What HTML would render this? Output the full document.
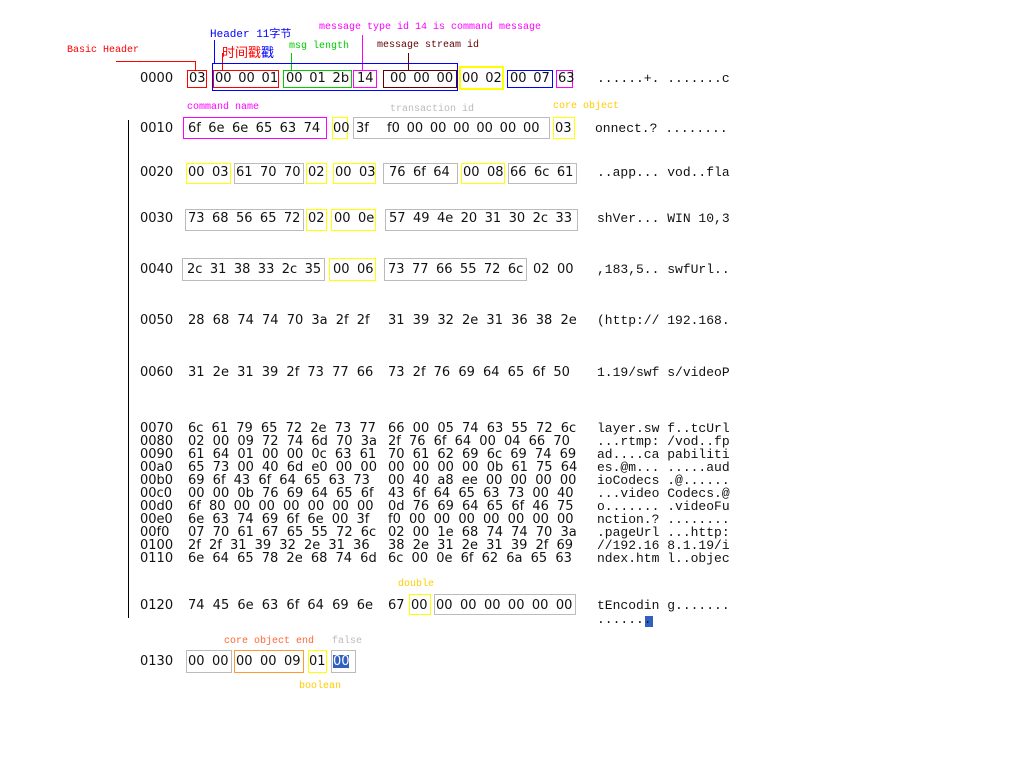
<!DOCTYPE html>
<html><head><meta charset="utf-8"><style>
body{margin:0;background:#fff;width:1024px;height:768px;position:relative;overflow:hidden;color:#111}
.t{position:absolute;font:13px "DejaVu Sans",sans-serif;white-space:pre;word-spacing:4px;line-height:16px}
.a{position:absolute;font:13px "Liberation Mono",monospace;white-space:pre;line-height:16px}
.m{position:absolute;font:13px "Liberation Mono",monospace;white-space:pre;line-height:13px}
.h{position:absolute;font:13px "DejaVu Sans",sans-serif;white-space:pre;word-spacing:4px;line-height:13px}
.l{position:absolute;font:10px "Liberation Mono",monospace;white-space:pre;line-height:12px}
.b{position:absolute;box-sizing:border-box;border:1px solid #bbb}
.v{position:absolute;width:1px}
.hz{position:absolute;height:1px}
.w{word-spacing:3.3px}
.w3{word-spacing:2.6px}
</style></head><body>

<div class="l" style="left:67px;top:45px;color:#f00">Basic Header</div>
<div class="hz" style="left:116px;top:61px;width:80px;background:#f00"></div>
<div class="v" style="left:195px;top:61px;height:9px;background:#f00"></div>
<div class="l" style="left:210px;top:27px;color:#00f;font-size:11px">Header 11<span style="font-family:'Noto Sans CJK SC',sans-serif">字节</span></div>
<div class="v" style="left:214px;top:40px;height:23px;background:#00f"></div>
<div class="l" style="left:222px;top:44px;color:#f00;font:13px 'Noto Sans CJK SC',sans-serif;line-height:16px">时间戳<span style="color:#00f">戳</span></div>
<div class="v" style="left:222px;top:53px;height:17px;background:#f00"></div>
<div class="l" style="left:289px;top:41px;color:#0c0">msg length</div>
<div class="v" style="left:291px;top:53px;height:17px;background:#0c0"></div>
<div class="l" style="left:319px;top:22px;color:#f0f">message type id 14 is command message</div>
<div class="v" style="left:362px;top:35px;height:35px;background:#f0f"></div>
<div class="l" style="left:377px;top:40px;color:#600">message stream id</div>
<div class="v" style="left:408px;top:53px;height:17px;background:#600"></div>

<div class="b" style="left:212px;top:63px;width:246px;height:28px;border-color:#00f"></div>
<div class="b" style="left:187px;top:70px;width:20px;height:18px;border-color:#f00"></div>
<div class="b" style="left:213px;top:70px;width:66px;height:18px;border-color:#f00"></div>
<div class="b" style="left:283px;top:70px;width:69px;height:18px;border-color:#0c0"></div>
<div class="b" style="left:353px;top:70px;width:24px;height:18px;border-color:#f0f"></div>
<div class="b" style="left:383px;top:70px;width:74px;height:18px;border-color:#600"></div>
<div class="b" style="left:459px;top:66px;width:45px;height:24px;border:2px solid #ff0"></div>
<div class="b" style="left:507px;top:70px;width:46px;height:18px;border-color:#00f"></div>
<div class="b" style="left:556px;top:70px;width:17px;height:18px;border-color:#f0f"></div>
<div class="t" style="left:140px;top:71px">0000</div>
<div class="t" style="left:189px;top:71px">03</div>
<div class="t w3" style="left:215px;top:71px">00 00 01</div>
<div class="t w3" style="left:286px;top:71px">00 01 2b</div>
<div class="t" style="left:357px;top:71px">14</div>
<div class="t w3" style="left:390px;top:71px">00 00 00</div>
<div class="t w3" style="left:462px;top:71px">00 02</div>
<div class="t w3" style="left:510px;top:71px">00 07</div>
<div class="t" style="left:558px;top:71px">63</div>
<div class="a" style="left:597px;top:71px">......+. .......c</div>

<div class="l" style="left:187px;top:102px;color:#f0f">command name</div>
<div class="l" style="left:390px;top:104px;color:#bbb">transaction id</div>
<div class="l" style="left:553px;top:101px;color:#fc0">core object</div>
<div class="v" style="left:128px;top:120px;height:498px;background:#000"></div>
<div class="b" style="left:183px;top:117px;width:144px;height:22px;border-color:#f0f"></div>
<div class="b" style="left:332px;top:117px;width:16px;height:22px;border-color:#ff0"></div>
<div class="b" style="left:353px;top:117px;width:197px;height:22px"></div>
<div class="b" style="left:553px;top:117px;width:22px;height:22px;border-color:#ff0"></div>
<div class="t" style="left:140px;top:121px">0010</div>
<div class="t w" style="left:188px;top:121px">6f 6e 6e 65 63 74</div>
<div class="t" style="left:333px;top:121px">00</div>
<div class="t" style="left:356px;top:121px">3f</div>
<div class="t w3" style="left:387px;top:121px">f0 00 00 00 00 00 00</div>
<div class="t" style="left:555px;top:121px">03</div>
<div class="a" style="left:595px;top:121px">onnect.? ........</div>

<div class="b" style="left:186px;top:163px;width:45px;height:21px;border-color:#ff0"></div>
<div class="b" style="left:234px;top:163px;width:70px;height:21px"></div>
<div class="b" style="left:306px;top:163px;width:21px;height:21px;border-color:#ff0"></div>
<div class="b" style="left:333px;top:163px;width:43px;height:21px;border-color:#ff0"></div>
<div class="b" style="left:383px;top:163px;width:75px;height:21px"></div>
<div class="b" style="left:461px;top:163px;width:44px;height:21px;border-color:#ff0"></div>
<div class="b" style="left:508px;top:163px;width:69px;height:21px"></div>
<div class="t" style="left:140px;top:165px">0020</div>
<div class="t w" style="left:188px;top:165px">00 03</div>
<div class="t w" style="left:236px;top:165px">61 70 70</div>
<div class="t" style="left:308px;top:165px">02</div>
<div class="t w" style="left:335px;top:165px">00 03</div>
<div class="t w" style="left:389px;top:165px">76 6f 64</div>
<div class="t w" style="left:463px;top:165px">00 08</div>
<div class="t w" style="left:510px;top:165px">66 6c 61</div>
<div class="a" style="left:597px;top:165px">..app... vod..fla</div>

<div class="b" style="left:185px;top:209px;width:119px;height:22px"></div>
<div class="b" style="left:306px;top:209px;width:21px;height:22px;border-color:#ff0"></div>
<div class="b" style="left:331px;top:209px;width:45px;height:22px;border-color:#ff0"></div>
<div class="b" style="left:385px;top:209px;width:193px;height:22px"></div>
<div class="t" style="left:140px;top:211px">0030</div>
<div class="t w" style="left:188px;top:211px">73 68 56 65 72</div>
<div class="t" style="left:308px;top:211px">02</div>
<div class="t w" style="left:334px;top:211px">00 0e</div>
<div class="t w" style="left:389px;top:211px">57 49 4e 20 31 30 2c 33</div>
<div class="a" style="left:597px;top:211px">shVer... WIN 10,3</div>

<div class="b" style="left:182px;top:258px;width:143px;height:23px"></div>
<div class="b" style="left:329px;top:258px;width:47px;height:23px;border-color:#ff0"></div>
<div class="b" style="left:384px;top:258px;width:143px;height:23px"></div>
<div class="t" style="left:140px;top:262px">0040</div>
<div class="t w" style="left:187px;top:262px">2c 31 38 33 2c 35</div>
<div class="t w" style="left:333px;top:262px">00 06</div>
<div class="t w" style="left:388px;top:262px">73 77 66 55 72 6c</div>
<div class="t w" style="left:533px;top:262px">02 00</div>
<div class="a" style="left:597px;top:262px">,183,5.. swfUrl..</div>

<div class="t" style="left:140px;top:313px">0050</div>
<div class="t" style="left:188px;top:313px">28 68 74 74 70 3a 2f 2f</div>
<div class="t" style="left:388px;top:313px">31 39 32 2e 31 36 38 2e</div>
<div class="a" style="left:597px;top:313px">(http:// 192.168.</div>
<div class="t" style="left:140px;top:365px">0060</div>
<div class="t" style="left:188px;top:365px">31 2e 31 39 2f 73 77 66</div>
<div class="t" style="left:388px;top:365px">73 2f 76 69 64 65 6f 50</div>
<div class="a" style="left:597px;top:365px">1.19/swf s/videoP</div>

<div class="h" style="left:140px;top:422px">0070
0080
0090
00a0
00b0
00c0
00d0
00e0
00f0
0100
0110</div>
<div class="h" style="left:188px;top:422px">6c 61 79 65 72 2e 73 77
02 00 09 72 74 6d 70 3a
61 64 01 00 00 0c 63 61
65 73 00 40 6d e0 00 00
69 6f 43 6f 64 65 63 73
00 00 0b 76 69 64 65 6f
6f 80 00 00 00 00 00 00
6e 63 74 69 6f 6e 00 3f
07 70 61 67 65 55 72 6c
2f 2f 31 39 32 2e 31 36
6e 64 65 78 2e 68 74 6d</div>
<div class="h" style="left:388px;top:422px">66 00 05 74 63 55 72 6c
2f 76 6f 64 00 04 66 70
70 61 62 69 6c 69 74 69
00 00 00 00 0b 61 75 64
00 40 a8 ee 00 00 00 00
43 6f 64 65 63 73 00 40
0d 76 69 64 65 6f 46 75
f0 00 00 00 00 00 00 00
02 00 1e 68 74 74 70 3a
38 2e 31 2e 31 39 2f 69
6c 00 0e 6f 62 6a 65 63</div>
<div class="m" style="left:597px;top:422px">layer.sw f..tcUrl
...rtmp: /vod..fp
ad....ca pabiliti
es.@m... .....aud
ioCodecs .@......
...video Codecs.@
o....... .videoFu
nction.? ........
.pageUrl ...http:
//192.16 8.1.19/i
ndex.htm l..objec</div>

<div class="l" style="left:398px;top:579px;color:#fc0">double</div>
<div class="b" style="left:409px;top:594px;width:22px;height:21px;border-color:#ff0"></div>
<div class="b" style="left:434px;top:594px;width:142px;height:21px"></div>
<div class="t" style="left:140px;top:598px">0120</div>
<div class="t" style="left:188px;top:598px">74 45 6e 63 6f 64 69 6e</div>
<div class="t" style="left:388px;top:598px">67</div>
<div class="t" style="left:411px;top:598px">00</div>
<div class="t w" style="left:436px;top:598px">00 00 00 00 00 00</div>
<div class="a" style="left:597px;top:598px">tEncodin g.......</div>
<div style="position:absolute;left:645px;top:616px;width:8px;height:11px;background:#3060c0"></div>
<div class="a" style="left:597px;top:612px">.......</div>

<div class="l" style="left:224px;top:636px;color:#f63">core object end</div>
<div class="l" style="left:332px;top:636px;color:#bbb">false</div>
<div class="b" style="left:186px;top:650px;width:46px;height:23px"></div>
<div class="b" style="left:234px;top:650px;width:70px;height:23px;border-color:#f93"></div>
<div class="b" style="left:308px;top:650px;width:19px;height:23px;border-color:#ff0"></div>
<div class="b" style="left:331px;top:650px;width:25px;height:23px"></div>
<div style="position:absolute;left:333px;top:655px;width:16px;height:13px;background:#3060c0"></div>
<div class="t" style="left:140px;top:654px">0130</div>
<div class="t w" style="left:188px;top:654px">00 00</div>
<div class="t w" style="left:236px;top:654px">00 00 09</div>
<div class="t" style="left:309px;top:654px">01</div>
<div class="t" style="left:333px;top:654px;color:#fff">00</div>
<div class="l" style="left:299px;top:681px;color:#fc0">boolean</div>
</body></html>
